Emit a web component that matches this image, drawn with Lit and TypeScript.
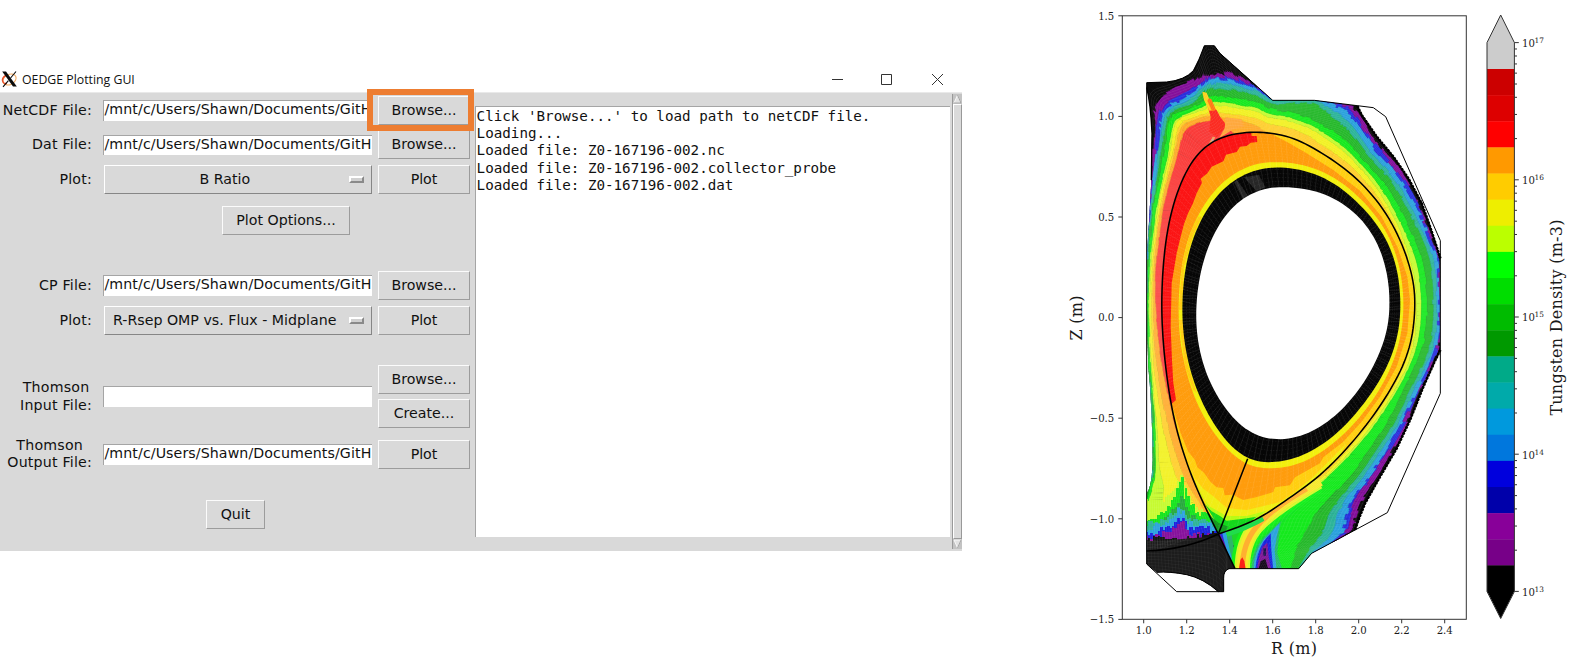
import { LitElement, html, css, svg } from "lit";
import { customElement, property } from "lit/decorators.js";

type Pt = [number, number];

const PATH = "/mnt/c/Users/Shawn/Documents/GitH";

/* ---------- geometry helpers ---------- */

const cat = (a: number, b: number, c: number, d: number, t: number) =>
  0.5 * (2 * b + (c - a) * t + (2 * a - 5 * b + 4 * c - d) * t * t + (3 * b - a - 3 * c + d) * t * t * t);

/* low-pass over a list of rows without shrinking the shape */
function relax(rows: number[][], closed: boolean, rounds: number): number[][] {
  let cur = rows;
  const L = rows.length;
  for (let r = 0; r < rounds * 2; r++) {
    const w = r % 2 ? -0.505 : 0.5;
    const src = cur;
    cur = src.map((p, i) => {
      if (!closed && (i === 0 || i === L - 1)) return p;
      const a = src[(i - 1 + L) % L];
      const b = src[(i + 1) % L];
      return p.map((v, j) => v + w * ((a[j] + b[j]) / 2 - v));
    });
  }
  return cur;
}

function smooth(pts: Pt[], closed: boolean, n = 6): Pt[] {
  const out: Pt[] = [];
  const L = pts.length;
  const at = (i: number) => (closed ? pts[(i + L) % L] : pts[Math.max(0, Math.min(L - 1, i))]);
  const segs = closed ? L : L - 1;
  for (let i = 0; i < segs; i++) {
    for (let k = 0; k < n; k++) {
      const t = k / n;
      out.push([
        cat(at(i - 1)[0], at(i)[0], at(i + 1)[0], at(i + 2)[0], t),
        cat(at(i - 1)[1], at(i)[1], at(i + 1)[1], at(i + 2)[1], t),
      ]);
    }
  }
  if (!closed) out.push(pts[L - 1]);
  return relax(out, closed, n * n * 4) as Pt[];
}

const toPath = (pts: Pt[], closed = false) =>
  "M" + pts.map((p) => p[0].toFixed(1) + " " + p[1].toFixed(1)).join("L") + (closed ? "Z" : "");

const curve = (pts: Pt[], closed = false) => toPath(smooth(pts, closed), closed);

const parse = (s: string): Pt[] => s.split(" ").map((q) => q.split(",").map(Number) as Pt);

let seed = 7;
const rnd = () => {
  seed = (seed * 16807) % 2147483647;
  return seed / 2147483647;
};

/* ---------- vessel, separatrix and core outlines ---------- */

const WALL =
  "M260 248L320 246Q375 240 400 212Q418 180 433 137H463L480 160L638 301H763L940 323L977 350L1141 722V1180L982 1538L755 1660L716 1706H507Q490 1712 491 1735V1775H350L260 1692Z";

const MESH =
  "M260 248L320 246Q375 240 400 212Q418 180 433 137H463L480 160L638 301H763L892 318L905 345L950 410L1000 470L1045 535L1085 610L1110 680L1128 735L1141 775V1050L1125 1082L1090 1160L1050 1260L1010 1345L960 1430L915 1510L895 1560L885 1590L835 1618L755 1660L716 1706H507Q490 1712 491 1735V1775H475Q430 1735 380 1724Q330 1714 290 1717L260 1692V1480Q276 1460 278 1380Q277 1230 265 1100L261 980V760L268 650L274 540L276 400Q272 310 260 262Z";

const SEP = parse(
  "475,1602 440,1530 400,1440 365,1340 335,1220 315,1080 306,950 308,830 320,710 345,600 385,505 434,444 492,411 560,398 620,399 690,412 760,445 840,496 915,562 978,642 1026,735 1056,830 1064,910 1057,1000 1033,1085 990,1170 930,1260 860,1345 780,1425 700,1485 620,1540 550,1575 475,1602"
);
const HOLE = parse(
  "670,562 603,571 541,603 487,661 446,740 420,830 409,930 415,1025 438,1115 477,1195 527,1260 585,1302 650,1317 722,1307 792,1272 856,1217 911,1147 953,1070 980,990 988,908 980,820 953,735 908,665 846,611 765,574"
);
const RING = parse(
  "650,503 580,514 512,550 453,612 408,695 380,790 368,895 371,1000 390,1105 424,1200 468,1280 517,1340 568,1375 625,1386 694,1377 765,1346 836,1294 902,1222 960,1138 1000,1050 1019,958 1018,862 1000,772 960,689 900,616 822,551 733,513"
);
const HALO = parse(
  "640,487 570,499 503,536 443,600 397,685 369,780 357,890 359,1000 377,1105 410,1205 455,1288 508,1352 561,1391 622,1404 702,1395 780,1358 853,1300 918,1227 973,1142 1010,1052 1028,958 1027,860 1007,763 966,676 904,600 824,535 730,496"
);
const sepD = curve(SEP);

/* ---------- scrape-off layer: colour limits along spokes ---------- */

const BANDS = ["#fa3c3a", "#ffab2c", "#ffd02e", "#f3f224", "#c6fb30", "#16ea1e", "#26b92c", "#2db59a", "#2ca3de", "#2a2fe0", "#86109c", "#0c0c0c"];

// ax, ay, bx, by, then the outer limit of each band as a fraction of the spoke
const SPOKES: number[][] = [
  [466, 1590, 256, 1660, 0, 0.02, 0.08, 0.6, 0.9, 1, 1, 1, 1, 1, 1],
  [450, 1552, 256, 1580, 0, 0.03, 0.1, 0.65, 0.95, 1, 1, 1, 1, 1, 1],
  [428, 1505, 260, 1510, 0, 0.08, 0.17, 0.72, 0.97, 1, 1, 1, 1, 1, 1],
  [408, 1458, 268, 1460, 0, 0.15, 0.3, 0.7, 0.93, 0.98, 1, 1, 1, 1, 1],
  [385, 1400, 276, 1400, 0, 0.22, 0.45, 0.8, 0.9, 0.95, 0.98, 1, 1, 1, 1],
  [341, 1250, 274, 1250, 0.05, 0.35, 0.58, 0.78, 0.86, 0.93, 0.97, 1, 1, 1, 1],
  [317, 1100, 264, 1100, 0.2, 0.52, 0.66, 0.8, 0.88, 0.95, 1, 1, 1, 1, 1],
  [308, 1000, 261, 1000, 0.34, 0.55, 0.67, 0.8, 0.88, 0.96, 1, 1, 1, 1, 1],
  [306, 900, 260, 900, 0.46, 0.58, 0.68, 0.8, 0.88, 0.96, 1, 1, 1, 1, 1],
  [311, 800, 260, 800, 0.46, 0.57, 0.65, 0.75, 0.84, 0.92, 0.97, 1, 1, 1, 1],
  [323, 700, 261, 700, 0.38, 0.5, 0.56, 0.64, 0.71, 0.83, 0.9, 0.95, 1, 1, 1],
  [345, 600, 267, 595, 0.38, 0.47, 0.53, 0.6, 0.66, 0.77, 0.82, 0.88, 0.93, 0.96, 0.99],
  [385, 505, 274, 470, 0.36, 0.44, 0.48, 0.55, 0.6, 0.7, 0.77, 0.83, 0.88, 0.92, 0.97],
  [414, 463, 272, 360, 0.37, 0.44, 0.48, 0.54, 0.58, 0.66, 0.71, 0.76, 0.82, 0.86, 0.93],
  [440, 439, 266, 275, 0.33, 0.4, 0.43, 0.48, 0.5, 0.57, 0.61, 0.65, 0.7, 0.74, 0.83],
  [462, 424, 330, 246, 0.32, 0.38, 0.42, 0.47, 0.5, 0.56, 0.6, 0.66, 0.71, 0.78, 0.92],
  [480, 416, 400, 212, 0.28, 0.35, 0.39, 0.46, 0.51, 0.58, 0.68, 0.74, 0.78, 0.81, 0.9],
  [500, 409, 433, 137, 0.12, 0.2, 0.25, 0.33, 0.37, 0.44, 0.52, 0.57, 0.61, 0.63, 0.66],
  [525, 403, 463, 137, 0, 0.17, 0.23, 0.31, 0.35, 0.42, 0.51, 0.57, 0.62, 0.65, 0.68],
  [560, 398, 530, 205, 0, 0.18, 0.27, 0.37, 0.43, 0.54, 0.65, 0.73, 0.8, 0.84, 0.92],
  [595, 397, 590, 258, 0, 0.12, 0.3, 0.45, 0.53, 0.67, 0.8, 0.9, 0.96, 1, 1],
  [620, 398, 638, 301, 0, 0.03, 0.28, 0.48, 0.6, 0.76, 0.92, 1, 1, 1, 1],
  [680, 410, 700, 301, 0, 0, 0.25, 0.43, 0.52, 0.66, 0.93, 1, 1, 1, 1],
  [740, 434, 763, 301, 0, 0, 0.2, 0.36, 0.45, 0.58, 0.93, 1, 1, 1, 1],
  [770, 451, 820, 309, 0, 0, 0.15, 0.3, 0.38, 0.5, 0.76, 0.86, 0.96, 1, 1],
  [805, 473, 870, 315, 0, 0, 0.13, 0.26, 0.32, 0.44, 0.62, 0.73, 0.86, 0.93, 1],
  [840, 496, 905, 340, 0, 0, 0.12, 0.24, 0.3, 0.42, 0.58, 0.68, 0.79, 0.85, 0.92],
  [878, 526, 955, 416, 0, 0, 0.12, 0.24, 0.31, 0.43, 0.57, 0.67, 0.79, 0.85, 0.92],
  [915, 562, 1005, 478, 0, 0, 0.1, 0.22, 0.3, 0.44, 0.59, 0.69, 0.81, 0.87, 0.93],
  [949, 600, 1047, 540, 0, 0, 0.08, 0.18, 0.27, 0.43, 0.6, 0.71, 0.83, 0.88, 0.94],
  [978, 642, 1080, 602, 0, 0, 0.06, 0.15, 0.25, 0.42, 0.6, 0.72, 0.84, 0.89, 0.95],
  [1004, 688, 1103, 660, 0, 0, 0.05, 0.13, 0.25, 0.43, 0.62, 0.74, 0.86, 0.91, 0.96],
  [1026, 735, 1122, 715, 0, 0, 0.04, 0.1, 0.25, 0.43, 0.64, 0.76, 0.87, 0.92, 0.97],
  [1052, 815, 1141, 780, 0, 0, 0, 0.07, 0.24, 0.44, 0.67, 0.81, 0.91, 0.95, 0.99],
  [1064, 900, 1142, 900, 0, 0, 0, 0.06, 0.26, 0.48, 0.72, 0.86, 0.94, 0.98, 1],
  [1057, 1000, 1142, 1010, 0, 0, 0.03, 0.1, 0.25, 0.46, 0.7, 0.82, 0.92, 0.96, 1],
  [1033, 1085, 1125, 1085, 0, 0, 0.05, 0.14, 0.24, 0.42, 0.64, 0.76, 0.87, 0.92, 0.97],
  [990, 1170, 1085, 1175, 0, 0, 0.05, 0.15, 0.22, 0.42, 0.63, 0.74, 0.85, 0.9, 0.96],
  [930, 1260, 1050, 1265, 0, 0, 0.05, 0.14, 0.2, 0.45, 0.63, 0.73, 0.82, 0.87, 0.94],
  [860, 1345, 1008, 1350, 0, 0, 0.05, 0.13, 0.18, 0.48, 0.63, 0.72, 0.82, 0.86, 0.94],
  [780, 1425, 962, 1430, 0, 0.03, 0.08, 0.13, 0.16, 0.5, 0.64, 0.72, 0.81, 0.85, 0.94],
  [700, 1485, 925, 1490, 0, 0.03, 0.08, 0.12, 0.16, 0.52, 0.65, 0.73, 0.81, 0.86, 0.94],
  [620, 1540, 900, 1550, 0, 0, 0, 0, 0, 0.52, 0.67, 0.76, 0.85, 0.9, 0.96],
  [590, 1600, 885, 1592, 0, 0, 0, 0, 0, 0.5, 0.67, 0.78, 0.88, 0.92, 0.97],
  [575, 1660, 820, 1628, 0, 0, 0, 0, 0, 0.55, 0.75, 0.87, 1, 1, 1],
  [560, 1700, 755, 1662, 0, 0, 0, 0, 0, 0.75, 0.94, 1, 1, 1, 1],
  [550, 1730, 716, 1715, 0, 0, 0, 0, 0, 0.85, 1, 1, 1, 1, 1],
];

function fine(n: number): number[][] {
  const out: number[][] = [];
  const at = (i: number) => SPOKES[Math.max(0, Math.min(SPOKES.length - 1, i))];
  for (let i = 0; i < SPOKES.length - 1; i++) {
    for (let k = 0; k < n; k++) {
      const t = k / n;
      out.push(
        at(i).map((v, j) => (j < 4 ? cat(at(i - 1)[j], v, at(i + 1)[j], at(i + 2)[j], t) : v + (at(i + 1)[j] - v) * t))
      );
    }
  }
  out.push(at(SPOKES.length - 1));
  return relax(out, false, 24);
}

function buildSol() {
  const rows = fine(9);
  const cells = BANDS.map(() => "");
  const jitter = BANDS.map(() => 0);
  const pt = (r: number[], f: number) =>
    (r[0] + (r[2] - r[0]) * f).toFixed(1) + " " + (r[1] + (r[3] - r[1]) * f).toFixed(1);
  for (let i = 0; i < rows.length - 1; i++) {
    const a = rows[i];
    const b = rows[i + 1];
    const len = Math.hypot(a[2] - a[0], a[3] - a[1]);
    let prev = -0.06;
    for (let k = 0; k < BANDS.length; k++) {
      if (rnd() < 0.5) {
        const amp = k >= 8 ? 6 : k >= 5 ? 3 : 1.4;
        jitter[k] = (rnd() - 0.5) * 2 * amp;
      }
      const base = k === BANDS.length - 1 ? 1.1 : a[4 + k];
      if (base < 0.008) continue;
      let f = base + jitter[k] / len;
      if (base >= 0.995) f = 1.1;
      f = Math.max(f, prev);
      if (f > prev) {
        cells[k] += "M" + pt(a, prev) + "L" + pt(a, f) + "L" + pt(b, f) + "L" + pt(b, prev) + "Z";
        prev = f;
      }
    }
  }
  let along = "";
  for (let f = 0.03; f < 1; f += 0.036) {
    along += "M" + rows.map((r) => pt(r, f)).join("L");
  }
  let across = "";
  rows.forEach((r, i) => {
    if (i % 2 === 0) across += "M" + pt(r, 0) + "L" + pt(r, 1);
  });
  return { cells, along, across };
}
const SOL = buildSol();

/* ---------- core mesh lines ---------- */

function polar(pts: Pt[]) {
  const cx = 690;
  const cy = 930;
  const s = smooth(pts, true, 12).map((p) => ({ p, a: Math.atan2(p[1] - cy, p[0] - cx) }));
  return (ang: number): Pt => {
    let best = s[0].p;
    let bd = 9;
    for (const q of s) {
      const d = Math.abs(Math.atan2(Math.sin(q.a - ang), Math.cos(q.a - ang)));
      if (d < bd) {
        bd = d;
        best = q.p;
      }
    }
    return best;
  };
}

function buildCore() {
  const inner = polar(HOLE);
  const mid = polar(RING);
  const outer = polar(SEP.slice(0, -1));
  let spokes = "";
  const rings: Pt[][] = [];
  for (let k = 0; k < 17; k++) rings.push([]);
  const N = 170;
  for (let i = 0; i < N; i++) {
    const a = (i / N) * Math.PI * 2;
    const p = inner(a);
    const q = mid(a);
    const o = outer(a);
    spokes += toPath([p, q, o]);
    for (let k = 0; k < 5; k++) rings[k].push([p[0] + ((q[0] - p[0]) * (k + 0.5)) / 5, p[1] + ((q[1] - p[1]) * (k + 0.5)) / 5]);
    for (let k = 0; k < 12; k++) rings[5 + k].push([q[0] + ((o[0] - q[0]) * k) / 12, q[1] + ((o[1] - q[1]) * k) / 12]);
  }
  return { spokes, rings: rings.map((r) => toPath(r, true)).join("") };
}
const CORE = buildCore();

/* ragged strip along a polyline, drawn as short upright blocks */
function ragged(pts: Pt[], h: number, amp: number, step = 7): string {
  let d = "";
  for (let i = 0; i < pts.length - 1; i++) {
    const [x0, y0] = pts[i];
    const [x1, y1] = pts[i + 1];
    const n = Math.max(1, Math.round((x1 - x0) / step));
    for (let k = 0; k < n; k++) {
      const x = x0 + ((x1 - x0) * k) / n;
      const y = y0 + ((y1 - y0) * k) / n + (rnd() - 0.5) * amp;
      d += `M${x.toFixed(1)} ${y.toFixed(1)}h${step + 1}v${h}h-${step + 1}z`;
    }
  }
  return d;
}
const EDGE = parse("256,1592 300,1582 335,1562 352,1542 366,1548 380,1575 405,1582 430,1576 455,1582 482,1596");
const shift = (dy: number) => EDGE.map(([x, y]) => [x, y + dy] as Pt);
const LEFT_LEG: [string, string][] = [
  ["#c6fb30", ragged(parse("256,1500 280,1510 310,1500 335,1480 350,1450 360,1425 370,1450 385,1490 400,1520 430,1530 450,1550"), 140, 16)],
  ["#14e41c", ragged(parse("256,1570 285,1554 315,1526 340,1496 356,1446 364,1434 374,1466 390,1510 410,1545 435,1530 455,1560"), 120, 18)],
  ["#26a93c", ragged(parse("290,1574 320,1550 345,1518 360,1484 375,1514 392,1548 420,1566 450,1572"), 100, 18)],
  ["#2db596", ragged(shift(-20), 80, 16)],
  ["#2ca3de", ragged(shift(-8), 80, 20)],
  ["#1c22dd", ragged(shift(8), 70, 22)],
  ["#86109c", ragged(shift(24), 70, 20)],
  ["#141414", ragged(parse("256,1618 300,1610 335,1614 350,1620 380,1614 410,1608 440,1602 478,1600"), 80, 14)],
];

const legLines = () => {
  let d = "";
  for (let i = 0; i < 13; i++) {
    const y = 1624 + i * 9;
    d += `M256 ${y}Q${370} ${y + 2} ${440} ${1616 + i * 14}T${500} ${1700 + i * 14}`;
  }
  for (let i = 0; i < 22; i++) {
    d += `M${262 + i * 10} ${1620}Q${264 + i * 10} ${1690} ${272 + i * 10} ${1760}`;
  }
  return d;
};

const EDGE_DOTS =
  "M892 318L905 345L950 410L1000 470L1045 535L1085 610L1110 680L1128 735L1141 775M1141 1050L1125 1082L1090 1160L1050 1260L1010 1345L960 1430L915 1510L895 1560L885 1590";

/* ---------- colour bar ---------- */

const BAR = [
  "#cc0000", "#dd0000", "#ff0000", "#ff9900", "#ffcc00", "#eeee00", "#bbff00", "#00ff00", "#00dd00", "#00bb00",
  "#009900", "#00aa88", "#00aaaa", "#0099dd", "#0077dd", "#0000dd", "#0000aa", "#880099", "#770088", "#000000",
];

@customElement("density-plot")
export class DensityPlot extends LitElement {
  static styles = css`
    :host { display: block; width: 537px; height: 668px; }
    svg { display: block; }
    text { font-family: "DejaVu Serif", serif; fill: #1a1a1a; }
    .tick { font-size: 10.1px; }
    .exp { font-size: 7.4px; }
    .axis { font-size: 16px; }
    .line { fill: none; stroke: #333; stroke-width: 1; }
    .sep { fill: none; stroke: #000; stroke-width: 4.6; }
    .wall { fill: none; stroke: #000; stroke-width: 3; }
    .grid { fill: none; stroke: #fff; stroke-width: 1; }
    .soft { opacity: 0.24; }
    .faint { opacity: 0.12; }
    .dash { stroke-dasharray: 5 4; opacity: 0.2; }
    .dots { fill: none; stroke: #000; stroke-width: 8; stroke-dasharray: 7 3; }
    .rim { fill: none; stroke: #000; stroke-width: 4; }
    .stripe { fill: none; }
  `;

  private map() {
    return svg`
      <g transform="translate(1060 0) scale(0.33333)">
        <defs>
          <clipPath id="mesh"><path d=${MESH} /></clipPath>
          <clipPath id="core"><path d=${sepD} /></clipPath>
          <clipPath id="leg"><path d="M475 1602L525 1706V1715H730V1600L900 1350L700 1485L620 1540L550 1575Z" /></clipPath>
          <clipPath id="left"><path d="M250 1400H385L400 1440L440 1530L475 1602L525 1706V1790H250Z" /></clipPath>
        </defs>
        <g clip-path="url(#mesh)">
          <path d="M250 130H1150V1790H250Z" fill="#161616" />
          <path d="M475 1602L440 1530L400 1440V1510L600 1720H760V1600L800 1400L620 1540Z" fill="#1fd52a" />
          ${SOL.cells.map((d, i) => svg`<path d=${d} fill=${BANDS[i]} stroke=${BANDS[i]} stroke-width="1.4" />`)}

          <path d="M440 310L455 322L470 330L480 350L497 372L494 384L470 412L448 395L452 350Z" fill="#fb2a20" />
          <path d="M427 275L440 278L462 330L448 332L432 300Z" fill="#ffd21e" />
          <path d="M446 295L454 297L468 330L456 334L442 302Z" fill="#ff7a10" />
          <path d="M497 352L545 358L552 380L520 388L478 414L494 384Z" fill="#ffa83c" />
          <path d="M446 432L458 410L466 412L454 434Z" fill="#f0a060" />
          <path d="M456 418L462 426" stroke="#b8a0c0" stroke-width="4" />

          <g clip-path="url(#left)">
            ${LEFT_LEG.map(([c, d]) => svg`<path d=${d} fill=${c} shape-rendering="crispEdges" />`)}
            <path d="M250 1625L300 1622L480 1608L530 1706V1790H250Z" fill="#1c1c1c" />
          </g>

          <g clip-path="url(#leg)">
            <path class="stripe" d="M470 1596L530 1720" stroke="#2a2fe0" stroke-width="34" />
            <path class="stripe" d="M472 1600L524 1706" stroke="#7d1596" stroke-width="12" />
            <path class="stripe" d="M492 1595Q505 1660 534 1720" stroke="#2ca3de" stroke-width="12" />
            <path class="stripe" d="M506 1590Q514 1660 538 1720" stroke="#2db56a" stroke-width="14" />
            <path class="stripe" d="M582 1720Q582 1640 622 1588T745 1468" stroke="#14e424" stroke-width="46" />
            <path class="stripe" d="M546 1720Q544 1630 590 1580T770 1448" stroke="#14f01c" stroke-width="66" />
            <path class="stripe" d="M547 1720Q544 1630 588 1580T775 1445" stroke="#d3f82a" stroke-width="46" />
            <path class="stripe" d="M547 1720Q544 1634 588 1580T780 1442" stroke="#f6e92c" stroke-width="34" />
            <path class="stripe" d="M547 1720Q544 1636 588 1582T740 1466" stroke="#ffb030" stroke-width="16" />
            <path d="M536 1712L541 1680L547 1672L553 1684L558 1712Z" fill="#fb2018" />
            <path class="stripe" d="M500 1604Q560 1584 610 1556" stroke="#20dc4c" stroke-width="14" />
            <path d="M574 1712Q575 1640 625 1600L662 1564L656 1620L652 1660L668 1712Z" fill="#26b96c" />
            <path d="M580 1712Q582 1655 612 1618L660 1568L650 1612L644 1650L650 1712Z" fill="#2ca3de" />
            <path d="M586 1712Q588 1665 610 1625L632 1600L634 1650L640 1712Z" fill="#1c22dd" />
            <path d="M590 1712L598 1670L608 1640L622 1628L626 1670L634 1712Z" fill="#7d1596" />
            <path d="M594 1712L602 1684L616 1676L626 1712Z" fill="#120818" />
            <path d="M610 1645h8v22h-8z" fill="#1c1450" />
          </g>

          <path class="grid soft" d=${SOL.along} />
          <path class="grid faint" d=${SOL.across} />
          <g clip-path="url(#left)"><path class="grid faint" d=${legLines()} /></g>
        </g>

        <g clip-path="url(#core)">
          <path d=${sepD} fill="#ff9c0c" />
          <path d="M290 1250L348 1200L340 1150L336 1080L332 980L335 850L350 760L362 710L372 672L384 640L398 612L410 580L426 548L422 536L442 520L455 500L490 484L498 464L530 456L540 440L560 438L572 428L592 426L590 408L575 408L572 390H300Z" fill="#fb1414" />
          <path d="M300 1200L338 1222L362 1300L385 1355L405 1380L412 1402L432 1418L452 1446L470 1462L490 1464L494 1486L518 1484L550 1500L588 1492L640 1476L645 1462L690 1456L705 1432L780 1390L790 1372L850 1325L905 1265L960 1190L1010 1100L1042 1000L1050 900L1042 830L1012 740L965 650L900 572L820 510L740 460L680 425L640 405L800 380L1100 700L1120 1200L600 1640H400Z" fill="#ffcf10" />
          <path d="M380 1385L408 1440L430 1466L462 1490L500 1524L560 1530L620 1516L660 1506L700 1480L760 1430L860 1330L760 1500L500 1650Z" fill="#f0ee14" />
          <path d="M400 1440L425 1490L450 1520L500 1548L560 1548L620 1532L500 1620Z" fill="#b9fb14" />
          <path d="M415 1480L435 1512L455 1534L480 1548L500 1562L550 1556L590 1550L500 1620Z" fill="#14d81c" />
          <path d="M440 1530L456 1552L475 1568L505 1580L480 1620Z" fill="#149a20" />
          <path d=${curve(HALO, true)} fill="#f2f00c" />
          <path d="M357 930L366 930L372 800L400 705L425 650L415 650L390 700L366 790ZM357 960L375 1100L400 1170L410 1180L384 1095L368 960Z" fill="#ffcc10" />
          <path d=${curve(RING, true)} fill="#060606" />
          <path d="M522 546L532 541L566 590L550 600ZM552 532L596 524L616 562L590 574Z" fill="#262626" />
          <path class="grid soft" d=${CORE.spokes} />
          <path class="grid dash" d=${CORE.rings} />
          <path d=${curve(HOLE, true)} fill="#fff" />
        </g>

        <path class="sep" d=${sepD} />
        <path class="sep" d="M475 1602L525 1706M475 1602Q380 1648 260 1653M475 1602L563 1376" />
        <path class="wall" d=${WALL} />
        <path class="rim" d=${EDGE_DOTS} />
        <path class="dots" d=${EDGE_DOTS} />
        <path class="rim" d="M260 262Q272 310 276 400L274 540" />
        <path class="wall" d="M290 1717Q330 1714 380 1724Q430 1735 475 1775" />
      </g>
    `;
  }

  private bar() {
    const h = (591.5 - 69) / 20;
    const minor: number[] = [];
    for (let d = 0; d < 4; d++) for (let m = 2; m < 10; m++) minor.push(591.5 - 137.2 * (d + Math.log10(m)));
    return svg`
      <path d="M1487 42.6L1500.7 15L1514.4 42.6V69.5H1487Z" fill="#cccccc" />
      ${BAR.map((c, i) => svg`<rect x="1487" y=${69 + i * h} width="27.4" height=${i < 19 ? h + 0.4 : h} fill=${c} />`)}
      <path d="M1487 591L1500.7 618.5L1514.4 591Z" fill="#000" />
      <path class="line" d="M1487 42.6L1500.7 15L1514.4 42.6V591.5L1500.7 618.5L1487 591.5Z" />
      ${minor.map((y) => svg`<path class="line" d=${`M1514.4 ${y}h2.6`} />`)}
      ${[17, 16, 15, 14, 13].map((e, i) => {
        const y = 42.6 + i * 137.2;
        return svg`<path class="line" d=${`M1514.4 ${y}h4.4`} />
          <text class="tick" x="1522" y=${y + 4.4}>10</text><text class="exp" x="1534.5" y=${y + 0.4}>${e}</text>`;
      })}
      <text class="axis" transform="translate(1561.5 415.6) rotate(-90)" textLength="196">Tungsten Density (m-3)</text>
    `;
  }

  render() {
    const ys = ["1.5", "1.0", "0.5", "0.0", "−0.5", "−1.0", "−1.5"];
    const xs = ["1.0", "1.2", "1.4", "1.6", "1.8", "2.0", "2.2", "2.4"];
    return html`<svg width="537" height="668" viewBox="1040 0 537 668">
      ${this.map()}
      <rect class="line" x="1122.3" y="15.8" width="344" height="603.5" />
      ${ys.map((t, i) => svg`<path class="line" d=${`M1118.3 ${15.8 + i * 100.6}h4`} />
        <text class="tick" text-anchor="end" x="1114.2" y=${19.5 + i * 100.6}>${t}</text>`)}
      ${xs.map((t, i) => svg`<path class="line" d=${`M${1143.7 + i * 43} 619.3v4`} />
        <text class="tick" text-anchor="middle" x=${1143.7 + i * 43} y="633.6">${t}</text>`)}
      <text class="axis" x="1271" y="653.6" textLength="46">R (m)</text>
      <text class="axis" transform="translate(1082 340.5) rotate(-90)" textLength="45">Z (m)</text>
      ${this.bar()}
    </svg>`;
  }
}

@customElement("tk-button")
export class TkButton extends LitElement {
  @property() label = "";
  static styles = css`
    :host { display: block; box-sizing: border-box; height: 29px; border: 1px solid; border-width: 1px 1.5px 1.5px 1px;
      border-color: #fbfbfb #9c9c9c #9c9c9c #fbfbfb; line-height: 26px; text-align: center; white-space: nowrap; }
  `;
  render() {
    return html`${this.label}`;
  }
}

@customElement("app-root")
export class AppRoot extends LitElement {
  static styles = css`
    :host { display: flex; justify-content: space-between; width: 1577px; height: 668px; background: #fff; overflow: hidden;
      font: 14.2px/17.3px "DejaVu Sans", sans-serif; color: #111; }
    .window { width: 962px; padding-top: 66px; }
    .title { display: flex; align-items: center; height: 26px; }
    .title svg { display: block; }
    .name { font: 12.3px "Open Sans", sans-serif; color: #111; width: 115px; margin-left: 4px; white-space: nowrap; }
    .controls { margin-left: auto; margin-right: 18px; }
    .body { display: flex; height: 459px; background: #d9d9d9; border-top: 1px solid #e9e9e9; box-sizing: border-box; }
    .form { width: 475px; display: grid; box-sizing: border-box; grid-template-columns: 103px 269px 98px; padding-right: 5px;
      grid-template-rows: 34.5px 34.5px 34.5px 48px 23.7px 35px 34.5px 25px 34px 34px 6px 35.6px 24.5px 35px; align-items: center; align-content: start; }
    .label { grid-column: 1; justify-self: end; margin-right: 11px; text-align: center; white-space: nowrap; letter-spacing: 0.2px; }
    .field { grid-column: 2; }
    .action { grid-column: 3; margin-left: 6px; }
    .entry { height: 20.5px; box-sizing: border-box; border-top: 1.5px solid #a5a5a5; border-left: 1px solid #a5a5a5; background: #fff;
      white-space: nowrap; line-height: 17.5px; padding-left: 0.5px; letter-spacing: 0.09px; }
    .menu { display: flex; align-items: center; height: 29px; box-sizing: border-box; margin-left: 1px; border: 1.5px solid;
      border-color: #fff #868686 #868686 #fff; padding-right: 7px; }
    .value { flex: 1; text-align: center; white-space: nowrap; margin: 0 3px 0 -1px; }
    .knob { width: 15.5px; height: 7px; box-sizing: border-box; border: 2px solid; border-color: #fff #8a8a8a #8a8a8a #fff; background: #d0d0d0; }
    .both { grid-row: 9 / span 2; }
    .wide { grid-column: 2 / span 2; justify-self: center; width: 128px; margin-right: 1px; }
    .quit { grid-column: 1 / span 3; justify-self: center; width: 58.5px; margin-left: 1px; }
    .marked { position: relative; }
    .marked::after { content: ""; position: absolute; left: -12px; top: -8px; width: 95px; height: 30px; border: 6px solid #ed7d31; z-index: 2; }
    .log { flex: 1; height: 431px; margin-top: 13px; box-sizing: border-box; border-top: 1.5px solid #a5a5a5; border-left: 1.5px solid #a5a5a5;
      background: #fff; font: 14.22px/17.2px "DejaVu Sans Mono", monospace; white-space: pre; padding: 1px 0 0 0.6px; }
    .scroll { width: 10px; margin: 1px 0 2px 2.5px; background: #c3c3c3; display: flex; flex-direction: column; border-left: 1px solid #999; box-sizing: border-box; }
    .thumb { flex: 1; background: #dadada; border: 1px solid; border-color: #fff #999 #999 #fff; }
  `;

  private arrow(up: boolean) {
    return html`<svg width="9" height="10" viewBox="0 0 9 10">
      <path d=${up ? "M4.5 1L8 9H1Z" : "M1 1H8L4.5 9Z"} fill="#e2e2e2" stroke="#fff" stroke-width="0.8" />
      <path d=${up ? "M4.5 1L8 9H1" : "M8 1L4.5 9"} fill="none" stroke="#8d8d8d" stroke-width="0.8" />
    </svg>`;
  }

  private entry(row: number, label: string, action: string, marked = false) {
    return html`
      <div class="label" style="grid-row:${row}">${label}</div>
      <div class="field entry" style="grid-row:${row}">${PATH}</div>
      <tk-button class="action ${marked ? "marked" : ""}" style="grid-row:${row}" .label=${action}></tk-button>`;
  }

  private menu(row: number, value: string) {
    return html`
      <div class="label" style="grid-row:${row}">Plot:</div>
      <div class="field menu" style="grid-row:${row}"><span class="value">${value}</span><span class="knob"></span></div>
      <tk-button class="action" style="grid-row:${row}" .label=${"Plot"}></tk-button>`;
  }

  render() {
    return html`
      <div class="window">
        <div class="title">
          <svg width="18" height="18" viewBox="0 0 18 18">
            <ellipse cx="9.5" cy="9.5" rx="7" ry="5" transform="rotate(-28 9.5 9.5)" fill="none" stroke="#f3b06c" stroke-width="1.2" />
            <path d="M6.5 5Q1 8 3 12Q4 14 7 13.5" fill="none" stroke="#e8502a" stroke-width="1.5" />
            <path d="M2.2 1.5H6L16.8 16.5H13Z" fill="#0b0b0b" />
            <path d="M16 1.5L10.6 8M8.4 10.6L3 16.8" stroke="#0b0b0b" stroke-width="1.1" />
          </svg>
          <span class="name">OEDGE Plotting GUI</span>
          <svg class="controls" width="112" height="14" viewBox="0 0 112 14" fill="none" stroke="#333" stroke-width="1">
            <path d="M0 7.5H11M49.5 2.5H59.5V12.5H49.5ZM100 2L111 13M111 2L100 13" />
          </svg>
        </div>
        <div class="body">
          <div class="form">
            ${this.entry(1, "NetCDF File:", "Browse...", true)}
            ${this.entry(2, "Dat File:", "Browse...")}
            ${this.menu(3, "B Ratio")}
            <tk-button class="wide" style="grid-row:4" .label=${"Plot Options..."}></tk-button>
            ${this.entry(6, "CP File:", "Browse...")}
            ${this.menu(7, "R-Rsep OMP vs. Flux - Midplane")}
            <div class="label both">Thomson<br />Input File:</div>
            <div class="field entry both"></div>
            <tk-button class="action" style="grid-row:9" .label=${"Browse..."}></tk-button>
            <tk-button class="action" style="grid-row:10" .label=${"Create..."}></tk-button>
            ${this.entry(12, "", "Plot")}
            <div class="label" style="grid-row:12">Thomson<br />Output File:</div>
            <tk-button class="quit" style="grid-row:14" .label=${"Quit"}></tk-button>
          </div>
          <div class="log">${[
            "Click 'Browse...' to load path to netCDF file.",
            "Loading...",
            "Loaded file: Z0-167196-002.nc",
            "Loaded file: Z0-167196-002.collector_probe",
            "Loaded file: Z0-167196-002.dat",
          ].join("\n")}</div>
          <div class="scroll">${this.arrow(true)}<div class="thumb"></div>${this.arrow(false)}</div>
        </div>
      </div>
      <density-plot></density-plot>
    `;
  }
}
